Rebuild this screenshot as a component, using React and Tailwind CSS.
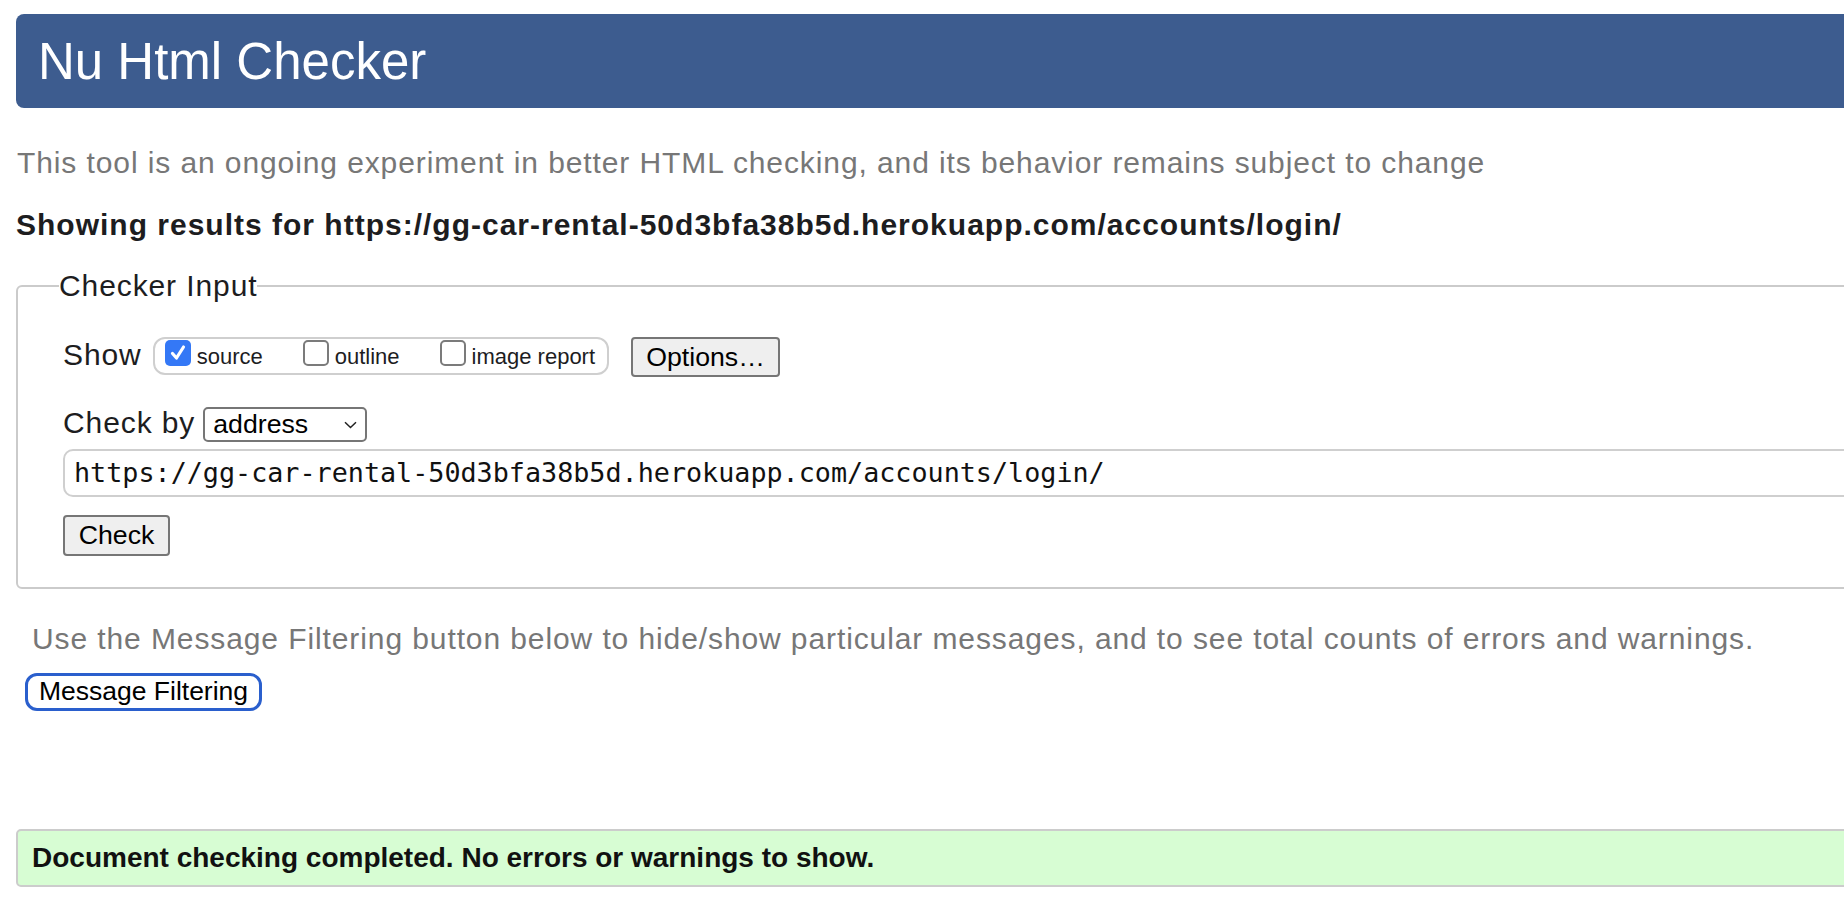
import React from 'react'

function CheckBox({ checked }) {
  if (checked) {
    return (
      <span className="flex h-[26px] w-[26px] shrink-0 items-center justify-center rounded-[5px] bg-[#3478f6]">
        <svg width="18" height="18" viewBox="0 0 18 18" fill="none">
          <path d="M3.5 9.5 L7.5 14 L14.5 3" stroke="white" strokeWidth="3.2" strokeLinecap="round" strokeLinejoin="round" />
        </svg>
      </span>
    )
  }
  return <span className="block h-[26px] w-[26px] shrink-0 rounded-[5px] border-2 border-[#7b7b7b] bg-white" />
}

function ShowOption({ checked, label, first }) {
  return (
    <label className={`flex items-start ${first ? '' : 'ml-[40px]'}`}>
      <span className="mt-[1px] block">
        <CheckBox checked={checked} />
      </span>
      <span className="mt-[5px] ml-[6px] text-[22px] leading-[26px] text-[#1d1d1f]">{label}</span>
    </label>
  )
}

export default function App() {
  return (
    <div className="h-[912px] w-full overflow-hidden bg-white font-['Liberation_Sans',Arial,sans-serif]">
      <div className="w-[1900px] pl-4">
        <header className="mt-[14px] flex h-[94px] items-center rounded-lg bg-[#3d5c8f] pl-[22px]">
          <h1 className="text-[51px] leading-none text-white">Nu Html Checker</h1>
        </header>

        <p className="mt-[37px] pl-[1px] text-[30px] leading-[36px] tracking-[0.9px] text-[#777777]">
          This tool is an ongoing experiment in better HTML checking, and its behavior remains subject to change
        </p>
        <p className="mt-[26px] text-[30px] font-bold leading-[36px] tracking-[1px] text-[#1d1d1f]">
          Showing results for https://gg-car-rental-50d3bfa38b5d.herokuapp.com/accounts/login/
        </p>

        <fieldset className="mt-[26px] rounded-[6px] border-2 border-[#cbcbcb] pb-[31px] pl-[45px]">
          <legend className="-ml-[4px] text-[30px] leading-[33px] tracking-[0.9px] text-[#1d1d1f]">Checker Input</legend>

          <div className="mt-[35px] flex items-start">
            <span className="text-[30px] leading-[35px] tracking-[0.9px] text-[#1d1d1f]">Show</span>
            <div className="ml-[11px] flex h-[38px] items-start rounded-[12px] border-2 border-[#cfcfcf] pl-[10px] pr-[12px]">
              <ShowOption checked first label="source" />
              <ShowOption label="outline" />
              <ShowOption label="image report" />
            </div>
            <button className="ml-[22px] flex h-[40px] w-[149px] items-center justify-center rounded-[4px] border-2 border-[#767676] bg-[#efefef] text-[26.7px] text-black">
              Options…
            </button>
          </div>

          <div className="mt-[30px] flex items-start">
            <span className="text-[30px] leading-[32px] tracking-[0.9px] text-[#1d1d1f]">Check by</span>
            <div className="ml-[8px] flex h-[35px] w-[164px] items-center justify-between rounded-[5px] border-2 border-[#767676] bg-white pl-[8px] pr-[8px]">
              <span className="text-[26.7px] leading-none text-black">address</span>
              <svg width="13" height="8" viewBox="0 0 13 8" fill="none">
                <path d="M1 1.2 L6.5 6.5 L12 1.2" stroke="#222" strokeWidth="1.5" />
              </svg>
            </div>
          </div>

          <div className="mt-[7px] flex h-[48px] items-center rounded-[10px] border-2 border-[#cfcfcf] pl-[9px]">
            <span className="font-['DejaVu_Sans_Mono',monospace] text-[26.75px] leading-none text-[#111]">
              https://gg-car-rental-50d3bfa38b5d.herokuapp.com/accounts/login/
            </span>
          </div>

          <button className="mt-[18px] flex h-[41px] w-[107px] items-center justify-center rounded-[4px] border-2 border-[#767676] bg-[#efefef] text-[26.7px] text-black">
            Check
          </button>
        </fieldset>

        <p className="mt-[32px] pl-[16px] text-[30px] leading-[36px] tracking-[0.9px] text-[#777777]">
          Use the Message Filtering button below to hide/show particular messages, and to see total counts of errors and warnings.
        </p>
        <button className="ml-[9px] mt-[16px] flex h-[38px] w-[237px] items-center justify-center rounded-[12px] border-[3px] border-[#2a5fcd] bg-white text-[26.5px] text-black">
          Message Filtering
        </button>

        <div className="mt-[118px] flex h-[58px] items-center rounded-[5px] border-2 border-[#cccccc] bg-[#d7fdd3] pl-[14px]">
          <span className="text-[28px] font-bold text-[#111]">Document checking completed. No errors or warnings to show.</span>
        </div>
      </div>
    </div>
  )
}
